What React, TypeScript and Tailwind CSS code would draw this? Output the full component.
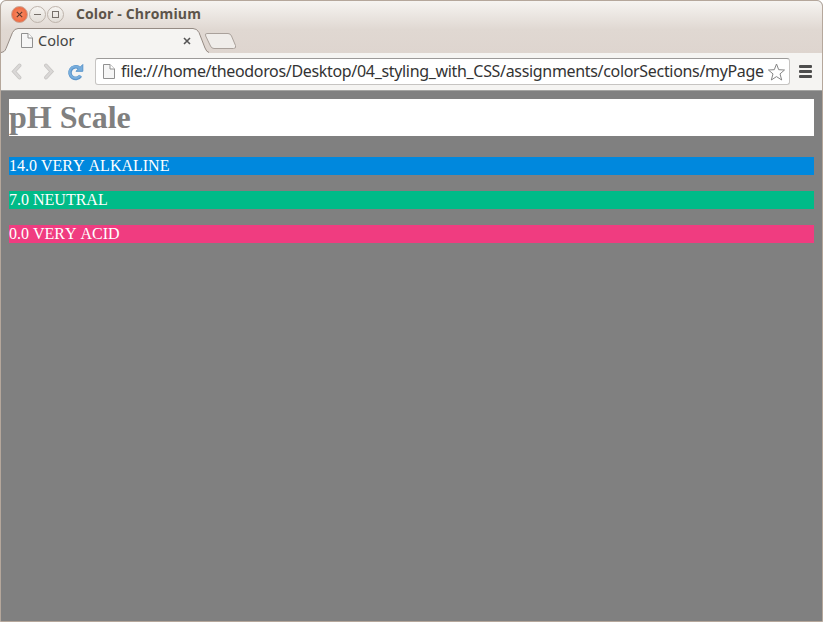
import React from "react";

function PageIcon({ className }: { className: string }) {
  return (
    <svg className={className} width="12" height="15" viewBox="0 0 12 15">
      <path d="M.5.5h6.5l4.5 4.5v9.5h-11z" fill="#f6f6f6" stroke="#909090" />
      <path d="M7 .5V5h4.5" fill="#fff" stroke="#909090" />
    </svg>
  );
}

function WindowButtons() {
  return (
    <svg className="-mt-px ml-[9px] shrink-0" width="56" height="20" viewBox="0 0 56 20">
      <defs>
        <radialGradient id="close" cx="50%" cy="50%" r="55%">
          <stop offset="0" stopColor="#ff9068" />
          <stop offset="1" stopColor="#e9643c" />
        </radialGradient>
        <linearGradient id="plain" x1="0" y1="0" x2="0" y2="1">
          <stop offset="0" stopColor="#f7f5f2" />
          <stop offset="1" stopColor="#e2ddd7" />
        </linearGradient>
      </defs>
      <circle cx="9.500" cy="10.500" r="8" fill="url(#close)" stroke="#c9a99a" />
      <path d="M6.800 7.800l5.400 5.400M12.200 7.800l-5.400 5.400" stroke="#60382b" strokeWidth="1.200" />
      <circle cx="27.500" cy="10.500" r="8" fill="url(#plain)" stroke="#bdb3aa" />
      <path d="M24 10.500h7" stroke="#77706a" />
      <circle cx="45.500" cy="10.500" r="8" fill="url(#plain)" stroke="#bdb3aa" />
      <rect x="42.500" y="7.500" width="6" height="6" fill="none" stroke="#77706a" />
    </svg>
  );
}

function TitleBar() {
  return (
    <div className="flex h-[27px] items-center">
      <WindowButtons />
      <span className="-mt-[2px] ml-[10px] whitespace-nowrap font-['Open_Sans','Noto_Sans',sans-serif] text-[14px] font-bold leading-[20px] tracking-[0.14px] text-[#5c544a]">
        Color - Chromium
      </span>
    </div>
  );
}

function TabStrip() {
  return (
    <div className="relative flex h-[25px] items-center">
      <svg className="absolute left-0 top-0" width="240" height="25" viewBox="0 0 240 25">
        <path d="M0 25V24.500C3 24 4 23 5 20.500L11.500 4.500Q13.500.5 17 .5H192Q196 .5 198 4.500L204 20Q205.500 24 208 24.500V25Z" fill="#f5f4f2" />
        <path d="M0 24.500C3 24 4 23 5 20.500L11.500 4.500Q13.500.5 17 .5H192Q196 .5 198 4.500L204 20Q205.500 24 208 24.500" fill="none" stroke="#958b84" />
        <path d="M206 5.500H227Q229.500 5.500 230.500 8L234.500 17.500Q235.500 20.500 232.500 20.500H213Q210.500 20.500 209.500 18L204.700 8Q203.500 5.500 206 5.500Z" fill="#f0edea" stroke="#aaa19b" />
      </svg>
      <PageIcon className="relative ml-[20px]" />
      <span className="z-10 -mt-[2px] ml-[5px] w-[145px] font-['Noto_Sans',sans-serif] text-[14.5px] leading-[20px] text-[#444]">
        Color
      </span>
      <svg className="relative" width="8" height="8" viewBox="0 0 8 8">
        <path d="M1 1l6 6M7 1l-6 6" stroke="#555" strokeWidth="1.600" />
      </svg>
    </div>
  );
}

function Toolbar() {
  return (
    <div className="flex h-[37px] items-center bg-[#f5f4f2]">
      <svg className="ml-[10px] shrink-0" width="12" height="18" viewBox="0 0 12 18">
        <path d="M8.500 2.500L3 8.500l5.500 6" fill="none" stroke="#c8c6c4" strokeWidth="3.800" strokeLinecap="round" />
        <path d="M8.500 2.500L3 8.500l5.500 6" fill="none" stroke="#d9d7d6" strokeWidth="2.200" strokeLinecap="round" />
      </svg>
      <svg className="ml-[20px] shrink-0" width="12" height="18" viewBox="0 0 12 18">
        <path d="M3 2.500l5.500 6L3 14.500" fill="none" stroke="#c8c6c4" strokeWidth="3.800" strokeLinecap="round" />
        <path d="M3 2.500l5.500 6L3 14.500" fill="none" stroke="#d9d7d6" strokeWidth="2.200" strokeLinecap="round" />
      </svg>
      <svg className="ml-[12px] shrink-0" width="18" height="18" viewBox="0 0 18 18">
        <path d="M12 4.800A5.800 5.800 0 1 0 13.600 12.800" fill="none" stroke="#5b95cb" strokeWidth="3.600" />
        <path d="M15.800 1.500V8.300H9Z" fill="#78aedd" stroke="#5b95cb" strokeLinejoin="round" />
        <path d="M12.600 5.200A5.800 5.800 0 1 0 13.200 12.500" fill="none" stroke="#78aedd" strokeWidth="2" />
      </svg>
      <div className="ml-[10px] flex h-[27px] w-[695px] shrink-0 items-center rounded-[3px] border border-[#c6c4c2] border-t-[#9c9a99] bg-white">
        <PageIcon className="ml-[7px] shrink-0" />
        <span className="-mt-[2px] ml-[6px] w-[646px] shrink-0 whitespace-nowrap font-['Noto_Sans',sans-serif] text-[16px] leading-[22px] tracking-[-0.325px] text-[#333]">
          file:///home/theodoros/Desktop/04_styling_with_CSS/assignments/colorSections/myPage
        </span>
        <svg className="shrink-0" width="18" height="18" viewBox="0 0 18 18">
          <path d="M9.500 1L11.700 6.700L17.500 7L13 10.900L14.700 17L9.500 13.600L4.300 17L6 10.900L1.400 7L7.300 6.700Z" fill="#fff" stroke="#858585" strokeLinejoin="round" />
        </svg>
      </div>
      <div className="ml-[9px] flex flex-col gap-[2px]">
        <div className="h-[3px] w-[13px] rounded-[1px] bg-[#4d4d4d]" />
        <div className="h-[3px] w-[13px] rounded-[1px] bg-[#4d4d4d]" />
        <div className="h-[3px] w-[13px] rounded-[1px] bg-[#4d4d4d]" />
      </div>
    </div>
  );
}

export default function App() {
  return (
    <div className="h-[622px] w-[823px] bg-white">
      <div className="flex h-full w-full flex-col overflow-hidden rounded-t-[6px] border border-[#b5a79b] bg-[#808080]">
        <div className="bg-linear-to-b from-[#f6f4f1] via-[#e0d8d2] via-55% to-[#ded5cf]">
          <TitleBar />
          <TabStrip />
        </div>
        <Toolbar />
        <div className="h-px shrink-0 bg-[#a3a3a1]" />
        <main className="flex flex-col px-2 pt-2 font-['Liberation_Serif',serif] text-[16px] leading-[18px] text-white [font-kerning:none]">
          <h1 className="mb-[21px] h-[37px] bg-white text-[32px] font-bold leading-[37px] text-[#808080]">pH Scale</h1>
          <p className="mb-4 h-[18px] bg-[#0088dd]">14.0 VERY ALKALINE</p>
          <p className="mb-4 h-[18px] bg-[#00bb88]">7.0 NEUTRAL</p>
          <p className="h-[18px] bg-[#f03c80]">0.0 VERY ACID</p>
        </main>
      </div>
    </div>
  );
}
